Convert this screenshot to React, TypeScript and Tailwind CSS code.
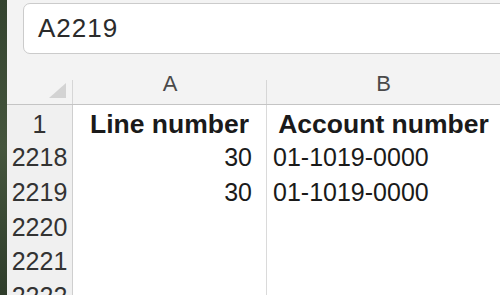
const rows = [
  { num: '1', a: 'Line number', b: 'Account number', h: 'h-[34px]', head: true },
  { num: '2218', a: '30', b: '01-1019-0000', h: 'h-[35px]' },
  { num: '2219', a: '30', b: '01-1019-0000', h: 'h-[35px]' },
  { num: '2220', a: '', b: '', h: 'h-[34px]' },
  { num: '2221', a: '', b: '', h: 'h-[35px]' },
  { num: '2222', a: '', b: '', h: 'h-[35px]' },
]

const headSep =
  "relative after:absolute after:right-0 after:bottom-0 after:h-[24px] after:w-px after:bg-[#d6d6d6] after:content-['']"

export default function App() {
  return (
    <div className="flex h-[295px] w-[500px] overflow-hidden bg-[#f3f3f3] font-['Liberation_Sans',Arial,sans-serif]">
      <div className="w-[7px] shrink-0 bg-gradient-to-b from-[#34432f] via-[#45553d] to-[#2f3d2b]" />
      <div className="flex min-w-0 flex-1 flex-col">
        {/* name box */}
        <div className="h-[56px] shrink-0 pt-[3px] pl-[16px]">
          <div className="flex h-[51px] w-[500px] items-center rounded-l-[7px] border border-[#cbcbcb] bg-white pl-[14px] text-[26px] tracking-[1px] text-[#2b2b2b]">
            A2219
          </div>
        </div>

        {/* column headers */}
        <div className="grid h-[49px] shrink-0 grid-cols-[66px_194px_1fr] border-b border-[#c4c4c4]">
          <div className={`${headSep} flex items-end justify-end pr-[7px] pb-[6px]`}>
            <svg width="17" height="15" viewBox="0 0 17 15">
              <polygon points="0,15 17,15 17,0" fill="#d3d3d3" />
            </svg>
          </div>
          <div className={`${headSep} flex items-end justify-center pb-[4px] text-[22px] text-[#4a4a4a]`}>A</div>
          <div className="flex items-end justify-center pb-[4px] text-[22px] text-[#4a4a4a]">B</div>
        </div>

        {/* rows */}
        <div className="flex flex-col">
          {rows.map((r) => (
            <div key={r.num} className={`grid ${r.h} shrink-0 grid-cols-[66px_194px_1fr]`}>
              <div className="flex items-center justify-center border-r border-b border-[#cfcfcf] bg-[#f0f0f0] text-[25px] text-[#333]">
                {r.num}
              </div>
              <div
                className={`flex items-center whitespace-nowrap border-r border-b border-[#dadada] bg-white text-[#1a1a1a] ${
                  r.head ? 'justify-center text-[26.5px] font-bold' : 'justify-end pr-[14px] text-[25px]'
                }`}
              >
                {r.a}
              </div>
              <div
                className={`flex items-center whitespace-nowrap border-b border-[#dadada] bg-white text-[#1a1a1a] ${
                  r.head ? 'justify-center text-[26.5px] font-bold' : 'pl-[6px] text-[25px]'
                }`}
              >
                {r.b}
              </div>
            </div>
          ))}
        </div>
      </div>
    </div>
  )
}
